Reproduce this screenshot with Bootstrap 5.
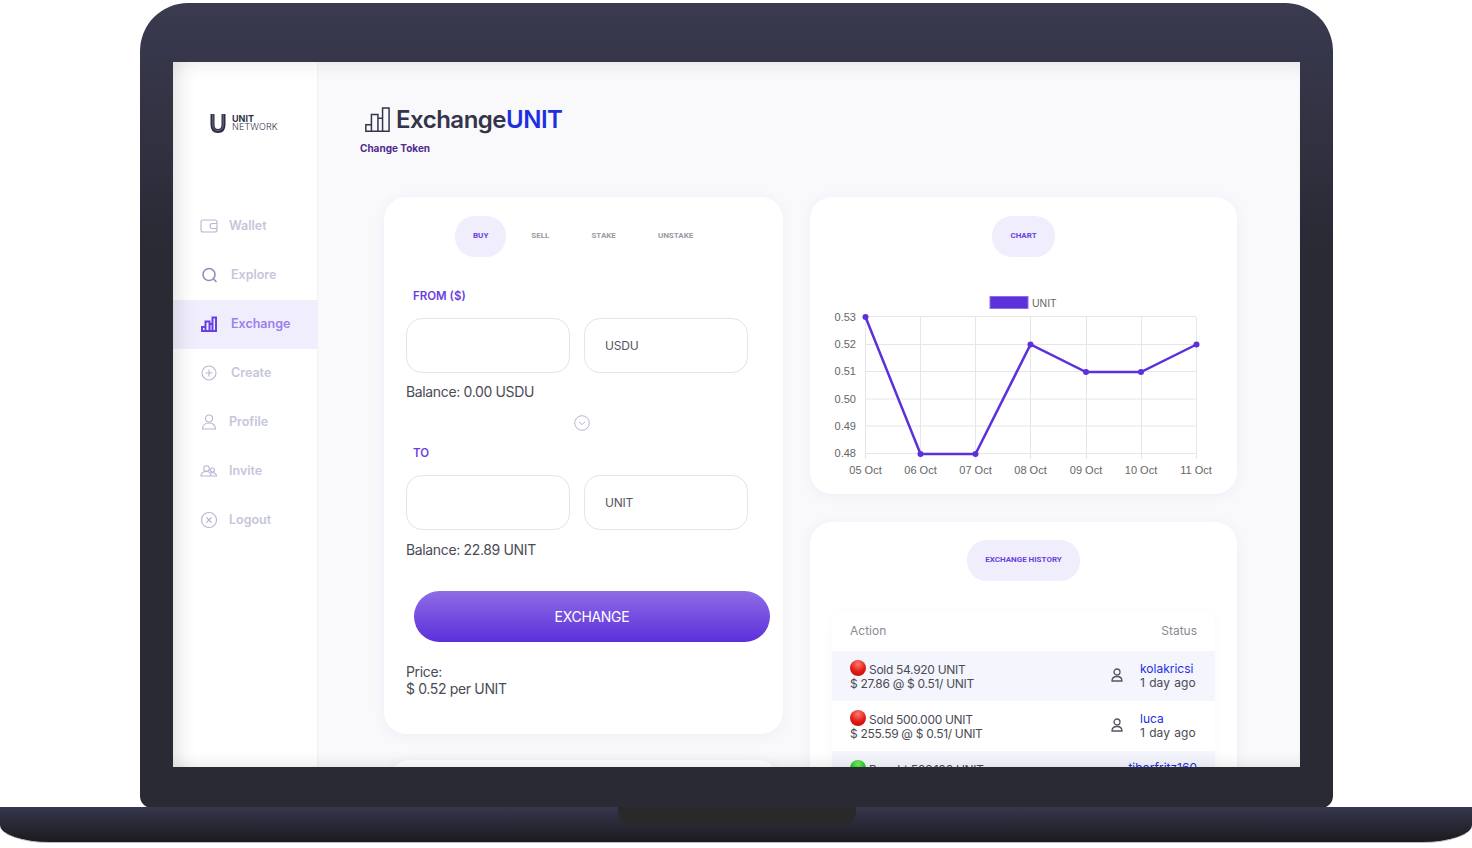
<!DOCTYPE html>
<html lang="en">
<head>
  <meta charset="UTF-8">
  <meta name="viewport" content="width=device-width, initial-scale=1.0">
  <title>ExchangeUNIT</title>
  <link href="https://cdn.jsdelivr.net/npm/bootstrap@5.3.0/dist/css/bootstrap.min.css" rel="stylesheet">
  <style>
    body { background: #fff; font-family: Inter, "Liberation Sans", sans-serif; color: #4b4b55; overflow: hidden; }
    .lid { width: 1193px; height: 805px; margin: 3px 0 0 140px; padding: 59px 33px 0; border-radius: 48px 48px 12px 12px; background: linear-gradient(#3a3a50, #2a2a35 30%, #2a2a35); }
    .screen { height: 705px; background: #f9f9fc; overflow: hidden; position: relative; }
    .screen::after { content: ""; position: absolute; inset: 0; pointer-events: none; box-shadow: inset 18px 0 18px -12px rgba(0,0,0,.11), inset 0 16px 16px -10px rgba(0,0,0,.06), inset 0 -14px 14px -10px rgba(0,0,0,.08); }
    .side { width: 145px; background: #fff; border-right: 1px solid #f0f0f6; }
    .logo-wrap { height: 140px; padding: 51px 0 0 37px; gap: 6px; }
    .logo-text { font-size: 9px; line-height: 8px; color: #33334a; padding-top: 2px; }
    .logo-text b { display: block; font-weight: 700; }
    .logo-text span { display: block; font-weight: 300; letter-spacing: .1px; }
    .menu-row { height: 49px; padding: 0 0 1px 27px; font-size: 12.5px; font-weight: 600; color: #c5c6da; text-decoration: none; gap: 11px; }
    .menu-row.wide-gap { gap: 13px; }
    .menu-row svg { width: 18px; height: 18px; fill: none; stroke: #b5b7d2; stroke-width: 1.1; }
    .menu-row.on { background: #f0eefc; color: #9a7fee; }
    .menu-row.on svg { stroke: #6a3fe0; stroke-width: 2; }
    .head-title { font-size: 24px; line-height: 35px; padding-top: 1px; font-weight: 600; color: #33344a; letter-spacing: -.5px; margin: 0; }
    .head-title em { font-style: normal; color: #1d2fe0; }
    .head-ico { margin: 0 6px 0 4px; }
    .head-sub { font-size: 10px; line-height: 14px; font-weight: 700; color: #4f2a8f; margin: 4px 0 0; }
    .main-pane { padding: 39px 0 0 42px; }
    .panel { border: 0; border-radius: 22px; background: #fff; box-shadow: 0 2px 12px rgba(90,90,160,.07); }
    .pill-tabs { font-family: Roboto, sans-serif; font-size: 8px; font-weight: 700; color: #9a9aa5; }
    .pill-tab { height: 41px; padding: 0 18px 1px; border-radius: 20px; color: #9a9aa5; text-decoration: none; }
    .pill-tab.on { background: #f0eefc; color: #6a3fe0; }
    .fld-label { font-size: 11.5px; line-height: 16px; font-weight: 600; color: #6a3fe0; margin: 0 0 0 7px; }
    .fld { width: 164px; height: 55px; border-radius: 16px; border: 1px solid #e4e4ea; font-size: 12px; letter-spacing: -.2px; padding: 0 20px; color: #55555f; background: #fff; }
    .bal { font-size: 14px; line-height: 20px; margin: 0; letter-spacing: -.35px; }
    .swap-row { padding-left: 168px; height: 20px; margin-top: 7px; }
    .btn-swap { width: 356px; height: 51px; margin-left: 8px; border: 0; border-radius: 26px; color: #fff; font-size: 14px; letter-spacing: -.3px; background: linear-gradient(#8d6ce6, #5c30da); }
    .hist-wrap { margin: 0 22px; border-radius: 10px; overflow: hidden; background: #fff; box-shadow: 0 2px 10px rgba(90,90,160,.05); }
    .hist-row { height: 50px; padding: 0 18px 2px; font-size: 12px; line-height: 14px; color: #4b4b55; letter-spacing: -.3px; }
    .hist-row.tint { background: #f4f5fd; }
    .hist-head { height: 39px; color: #8a8a92; letter-spacing: 0; }
    .dot { display: inline-block; width: 16px; height: 16px; border-radius: 50%; vertical-align: -2px; margin-right: 3px; }
    .dot-red { background: radial-gradient(circle at 50% 25%, #ff7a70, #e01a12 55%, #b50d08); }
    .dot-green { background: radial-gradient(circle at 50% 25%, #7cf06a, #1cc41c 55%, #0c960c); }
    .usr { color: #1d2fe0; }
    .usr-col { width: 57px; padding-top: 2px; letter-spacing: 0; word-spacing: 1px; }
    .usr-ico { width: 14px; height: 16px; margin-right: 16px; fill: none; stroke: #55555f; stroke-width: 1.3; }
    .chart-txt { font-family: "Liberation Sans", sans-serif; font-size: 11px; fill: #666; }
    .base { height: 36px; margin-top: -1px; position: relative; background: linear-gradient(#36364e, #1b1b1f); border-radius: 0 0 50px 50px / 0 0 18px 18px; border-bottom: 1px solid #bbb; }
    .notch { width: 238px; height: 18px; margin-left: 618px; background: #292929; border-radius: 0 0 14px 14px; }
  </style>
</head>
<body>
  <div class="lid">
    <div class="screen d-flex">
      <div class="side flex-shrink-0">
        <div class="logo-wrap d-flex">
          <svg width="16" height="20" viewBox="0 0 16 20" fill="none" stroke-linecap="butt"><path d="M2.500 1v10.500c0 4.500 2 6.500 5.500 6.500s5.500-2 5.500-6.500V1" stroke="#2c2d45" stroke-width="4"/><path d="M2.800 1v10.500c0 4 2 6 5.200 6s5.200-2 5.200-6V1" stroke="#8a8ba0" stroke-width=".7"/></svg>
          <div class="logo-text"><b>UNIT</b><span>NETWORK</span></div>
        </div>
        <a class="menu-row d-flex align-items-center" href="#"><svg viewBox="0 0 18 18"><rect x="1" y="3" width="16" height="12" rx="2"/><path d="M17 6.500h-4.500a2.500 2.500 0 0 0 0 5H17"/></svg>Wallet</a>
        <a class="menu-row wide-gap d-flex align-items-center" href="#"><svg viewBox="0 0 18 18" style="stroke:#8d90b5;stroke-width:1.600"><circle cx="9" cy="8.500" r="6"/><path d="M13.500 13l3 3"/></svg>Explore</a>
        <a class="menu-row wide-gap on d-flex align-items-center" href="#"><svg viewBox="0 0 18 18"><path d="M2 16v-4h3.500v4zM5.500 16V6.500h4V16zM9.500 9h3M12.500 16V2.500h3.500V16zM2 16h14"/></svg>Exchange</a>
        <a class="menu-row wide-gap d-flex align-items-center" href="#"><svg viewBox="0 0 18 18"><circle cx="9" cy="9" r="7"/><path d="M9 5.500v7M5.500 9h7"/></svg>Create</a>
        <a class="menu-row d-flex align-items-center" href="#"><svg viewBox="0 0 18 18"><circle cx="9" cy="5.500" r="3.500"/><path d="M2.500 16c0-4 3-6 6.500-6s6.500 2 6.500 6z"/></svg>Profile</a>
        <a class="menu-row d-flex align-items-center" href="#"><svg viewBox="0 0 18 18"><circle cx="6.500" cy="6.500" r="2.800"/><circle cx="12.500" cy="8" r="2"/><path d="M1 14c0-3 2.500-4.500 5.500-4.500S11 11 11 14zM11 10.500c3 0 5.500 1 5.500 3.500H11"/></svg>Invite</a>
        <a class="menu-row d-flex align-items-center" href="#"><svg viewBox="0 0 18 18"><circle cx="9" cy="9" r="7.500"/><path d="M6.500 6.500l5 5M11.500 6.500l-5 5"/></svg>Logout</a>
      </div>

      <div class="main-pane flex-grow-1">
        <h1 class="head-title d-flex align-items-center">
          <svg class="head-ico" width="26" height="26" viewBox="0 0 28 28" fill="none" stroke="#33344a" stroke-width="1.600"><path d="M2 26v-7h6v7zM8 26V8h7v18zM15 12h5M15 26h5M20 26V1h7v25z"/></svg>
          <span>Exchange<em>UNIT</em></span>
        </h1>
        <p class="head-sub">Change Token</p>

        <div class="d-flex align-items-start" style="margin:42px 0 0 24px;gap:27px">
          <div>
            <div class="card panel" style="width:399px;height:537px;padding:19px 22px 0">
              <div class="pill-tabs nav" style="margin-left:49px">
                <a class="pill-tab on d-flex align-items-center" href="#">BUY</a>
                <a class="pill-tab d-flex align-items-center" style="padding-left:25px;padding-right:21px" href="#">SELL</a>
                <a class="pill-tab d-flex align-items-center" style="padding-left:21px;padding-right:21px" href="#">STAKE</a>
                <a class="pill-tab d-flex align-items-center" style="padding-left:21px" href="#">UNSTAKE</a>
              </div>
              <p class="fld-label" style="margin-top:31px">FROM ($)</p>
              <div class="d-flex" style="gap:14px;margin-top:14px">
                <input class="fld" type="text">
                <input class="fld" type="text" value="USDU">
              </div>
              <p class="bal" style="margin-top:9px">Balance: 0.00 USDU</p>
              <div class="swap-row"><svg width="16" height="16" viewBox="0 0 16 16" fill="none" stroke="#b5b7d2"><circle cx="8" cy="8" r="7.300"/><path d="M5 7l3 2.500L11 7"/></svg></div>
              <p class="fld-label" style="margin-top:16px">TO</p>
              <div class="d-flex" style="gap:14px;margin-top:14px">
                <input class="fld" type="text">
                <input class="fld" type="text" value="UNIT">
              </div>
              <p class="bal" style="margin-top:10px">Balance: 22.89 UNIT</p>
              <button class="btn btn-swap" style="margin-top:31px" type="button">EXCHANGE</button>
              <p class="bal" style="margin-top:21px;line-height:17px">Price:<br>$ 0.52 per UNIT</p>
            </div>
            <div class="card panel" style="width:391px;height:100px;margin:26px 0 0 4px"></div>
          </div>

          <div>
            <div class="card panel" style="width:427px;height:297px;padding-top:19px">
              <div class="pill-tabs nav justify-content-center">
                <a class="pill-tab on d-flex align-items-center" href="#">CHART</a>
              </div>
              <svg class="flex-shrink-0" width="427" height="190" viewBox="0 0 427 190" style="margin-top:39px">
                <rect x="180" y=".500" width="38" height="12" fill="#5c30da" stroke="#8d6ce6"/>
                <text class="chart-txt" x="222" y="10.500" style="font-size:10.500px">UNIT</text>
                <g transform="translate(0,21)">
                  <g stroke="#e6e6e6" stroke-width="1">
                    <path d="M55 -.500H386M55 27.500H386M55 54.500H386M55 82H386M55 109H386M55 136.500H386"/>
                    <path d="M55.500 0V142M110.500 0V142M165.500 0V142M220.500 0V142M276.500 0V142M331.500 0V142M386.500 0V142"/>
                  </g>
                  <g class="chart-txt" text-anchor="end">
                    <text x="46" y="3.500">0.53</text><text x="46" y="31">0.52</text><text x="46" y="58">0.51</text>
                    <text x="46" y="85.500">0.50</text><text x="46" y="113">0.49</text><text x="46" y="140">0.48</text>
                  </g>
                  <g class="chart-txt" text-anchor="middle">
                    <text x="55.500" y="157">05 Oct</text><text x="110.500" y="157">06 Oct</text><text x="165.500" y="157">07 Oct</text>
                    <text x="220.500" y="157">08 Oct</text><text x="276" y="157">09 Oct</text><text x="331" y="157">10 Oct</text><text x="386" y="157">11 Oct</text>
                  </g>
                  <polyline points="55.500,0 110.500,137 165.500,137 220.500,27.500 276,55 331,55 386.500,27.500" fill="none" stroke="#5c30da" stroke-width="2.500"/>
                  <g fill="#5c30da">
                    <circle cx="55.500" cy="0" r="3"/><circle cx="110.500" cy="137" r="3"/><circle cx="165.500" cy="137" r="3"/>
                    <circle cx="220.500" cy="27.500" r="3"/><circle cx="276" cy="55" r="3"/><circle cx="331" cy="55" r="3"/><circle cx="386.500" cy="27.500" r="3"/>
                  </g>
                </g>
              </svg>
            </div>

            <div class="card panel" style="width:427px;height:400px;margin-top:28px;padding-top:18px">
              <div class="pill-tabs nav justify-content-center">
                <a class="pill-tab on d-flex align-items-center" href="#">EXCHANGE HISTORY</a>
              </div>
              <div class="hist-wrap" style="margin-top:31px">
                <div class="hist-row hist-head d-flex justify-content-between align-items-center"><span>Action</span><span>Status</span></div>
                <div class="hist-row tint d-flex align-items-center">
                  <div class="flex-grow-1"><span class="dot dot-red"></span>Sold 54.920 UNIT<br>$ 27.86 @ $ 0.51/ UNIT</div>
                  <svg class="usr-ico" viewBox="0 0 14 16"><circle cx="7" cy="5" r="3"/><path d="M2 14c0-3 2-4.500 5-4.500s5 1.500 5 4.500z"/></svg>
                  <div class="usr-col"><span class="usr">kolakricsi</span><br>1 day ago</div>
                </div>
                <div class="hist-row d-flex align-items-center">
                  <div class="flex-grow-1"><span class="dot dot-red"></span>Sold 500.000 UNIT<br>$ 255.59 @ $ 0.51/ UNIT</div>
                  <svg class="usr-ico" viewBox="0 0 14 16"><circle cx="7" cy="5" r="3"/><path d="M2 14c0-3 2-4.500 5-4.500s5 1.500 5 4.500z"/></svg>
                  <div class="usr-col"><span class="usr">luca</span><br>1 day ago</div>
                </div>
                <div class="hist-row tint d-flex align-items-center">
                  <div class="flex-grow-1"><span class="dot dot-green"></span>Bought 566.100 UNIT<br>$ 288.71 @ $ 0.51/ UNIT</div>
                  <div class="text-end" style="letter-spacing:0"><span class="usr">tiborfritz160</span><br>1 day ago</div>
                </div>
              </div>
            </div>
          </div>
        </div>
      </div>
    </div>
  </div>
  <div class="base">
    <div class="notch"></div>
  </div>
</body>
</html>
